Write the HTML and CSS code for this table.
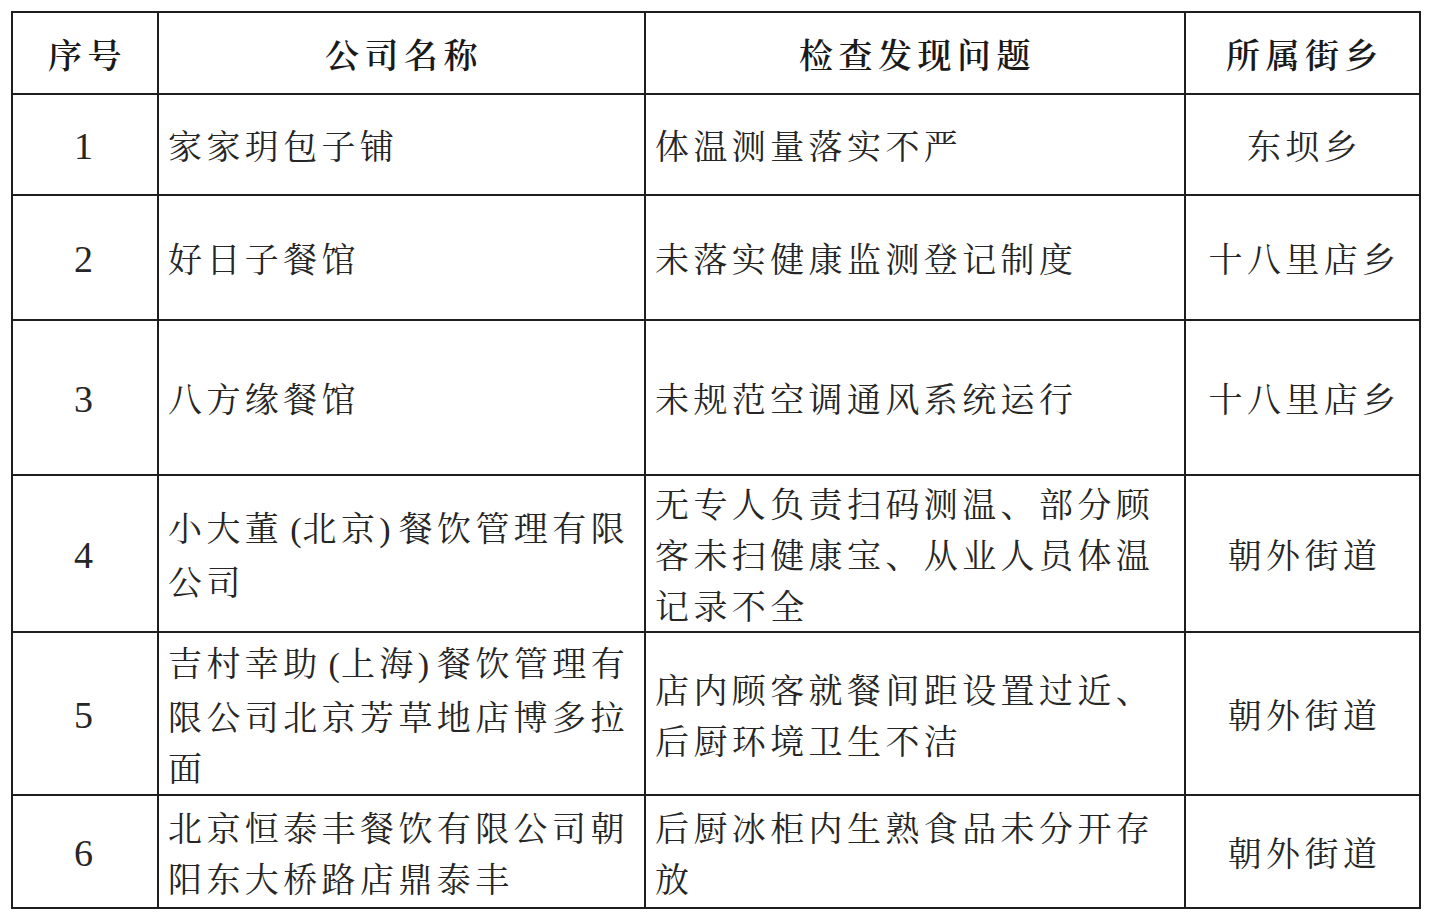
FILE: index.html
```html
<!DOCTYPE html>
<html lang="zh-CN">
<head>
<meta charset="utf-8">
<title>检查发现问题</title>
<link rel="stylesheet" href="styles.css">
</head>
<body>
<table class="report">
  <colgroup>
    <col class="c-no">
    <col class="c-name">
    <col class="c-issue">
    <col class="c-area">
  </colgroup>
  <thead>
    <tr class="r-head">
      <th>序号</th>
      <th>公司名称</th>
      <th>检查发现问题</th>
      <th>所属街乡</th>
    </tr>
  </thead>
  <tbody>
    <tr class="r1">
      <td class="num">1</td>
      <td class="txt">家家玥包子铺</td>
      <td class="txt">体温测量落实不严</td>
      <td class="area">东坝乡</td>
    </tr>
    <tr class="r2">
      <td class="num">2</td>
      <td class="txt">好日子餐馆</td>
      <td class="txt">未落实健康监测登记制度</td>
      <td class="area">十八里店乡</td>
    </tr>
    <tr class="r3">
      <td class="num">3</td>
      <td class="txt">八方缘餐馆</td>
      <td class="txt">未规范空调通风系统运行</td>
      <td class="area">十八里店乡</td>
    </tr>
    <tr class="r4">
      <td class="num">4</td>
      <td class="txt">小大董<span class="po">(</span>北京<span class="pc">)</span>餐饮管理有限<br>公司</td>
      <td class="txt">无专人负责扫码测温、部分顾<br>客未扫健康宝、从业人员体温<br>记录不全</td>
      <td class="area">朝外街道</td>
    </tr>
    <tr class="r5">
      <td class="num">5</td>
      <td class="txt">吉村幸助<span class="po">(</span>上海<span class="pc">)</span>餐饮管理有<br>限公司北京芳草地店博多拉<br>面</td>
      <td class="txt">店内顾客就餐间距设置过近、<br>后厨环境卫生不洁</td>
      <td class="area">朝外街道</td>
    </tr>
    <tr class="r6">
      <td class="num">6</td>
      <td class="txt">北京恒泰丰餐饮有限公司朝<br>阳东大桥路店鼎泰丰</td>
      <td class="txt">后厨冰柜内生熟食品未分开存<br>放</td>
      <td class="area">朝外街道</td>
    </tr>
  </tbody>
</table>
</body>
</html>
```

FILE: styles.css
```css
html, body {
  margin: 0;
  padding: 0;
  background: #ffffff;
}

body {
  padding: 11px 0 0 11px;
  font-family: "Noto Serif CJK SC", "Noto Sans CJK SC", "Liberation Serif", serif;
  color: #262626;
}

.report {
  border-collapse: collapse;
  table-layout: fixed;
  width: 1408px;
  border: 2px solid #1e1e1e;
}

.c-no { width: 146px; }
.c-name { width: 487px; }
.c-issue { width: 540px; }
.c-area { width: 235px; }

.report th,
.report td {
  border: 2px solid #1e1e1e;
  vertical-align: middle;
  padding: 0;
  white-space: nowrap;
  overflow: hidden;
}

.report th {
  font-weight: 600;
  font-size: 34px;
  letter-spacing: 5.5px;
  text-indent: 5px;
  text-align: center;
  color: #1a1a1a;
}

.report td {
  font-size: 34px;
  font-weight: 400;
  line-height: 51px;
  letter-spacing: 4.4px;
}

.report td.num {
  text-align: center;
  font-family: "Liberation Serif", serif;
  font-size: 38px;
  letter-spacing: 0;
  padding-right: 3px;
  padding-top: 3px;
}

.report td.txt {
  text-align: left;
  padding-left: 9px;
}

.report td.area {
  text-align: center;
  text-indent: 4px;
}

.po,
.pc {
  font-family: "Liberation Serif", serif;
}

.po {
  margin-left: 7px;
  letter-spacing: 1px;
}

.pc {
  letter-spacing: 8px;
}

.r-head { height: 82px; }
.r1 { height: 101px; }
.r2 { height: 125px; }
.r3 { height: 155px; }
.r4 { height: 157px; }
.r5 { height: 163px; }
.r6 { height: 113px; }
```
